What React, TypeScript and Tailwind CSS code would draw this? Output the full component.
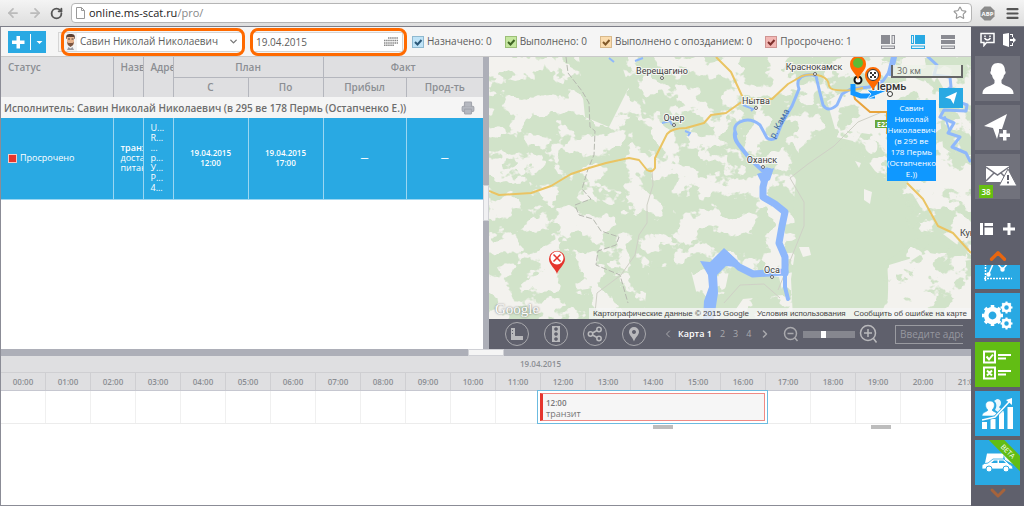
import { useState } from 'react'
import type { ReactNode } from 'react'
import { ArrowLeft, ArrowRight, ChevronDown, ChevronLeft, ChevronRight, ChevronUp, Menu, Printer, RotateCw, Star } from 'lucide-react'

interface StatusFilter {
    id: string
    label: string
    count: number
    box: string
    mark: string
}

const FILTERS: StatusFilter[] = [
    { id: 'assigned', label: 'Назначено', count: 0, box: 'bg-[#bfe3f7] border-[#8fb9d0]', mark: 'text-[#2c5878]' },
    { id: 'done', label: 'Выполнено', count: 0, box: 'bg-[#c5e79f] border-[#9cbf78]', mark: 'text-[#3f6425]' },
    { id: 'late', label: 'Выполнено с опозданием', count: 0, box: 'bg-[#fbdcae] border-[#d9b98b]', mark: 'text-[#80592a]' },
    { id: 'overdue', label: 'Просрочено', count: 1, box: 'bg-[#f2b7b4] border-[#cf9492]', mark: 'text-[#7d2f2c]' },
]

const HOUR_WIDTH = 45
const HOURS = Array.from({ length: 24 }, (_, i) => `${String(i).padStart(2, '0')}:00`)

const TOWNS = [
    { name: 'Верещагино', x: 173, y: 17, cx: 173, cy: 21 },
    { name: 'Очер', x: 185, y: 64, cx: 185, cy: 68 },
    { name: 'Нытва', x: 267, y: 47, cx: 267, cy: 51 },
    { name: 'Краснокамск', x: 325, y: 13, cx: 326, cy: 17 },
    { name: 'Оханск', x: 273, y: 106, cx: 274, cy: 110 },
    { name: 'Оса', x: 283, y: 216, cx: 283, cy: 220 },
]

function BrowserBar() {
    return (
        <header className="flex h-[27px] items-center border-b border-[#7d7e88] bg-gradient-to-b from-[#f4f4f4] to-[#dedede] pr-1 text-[#555]">
            <button aria-label="Назад" className="ml-1.5 text-[#bbb]"><ArrowLeft size={14} strokeWidth={3} /></button>
            <button aria-label="Вперёд" className="ml-2 text-[#bbb]"><ArrowRight size={14} strokeWidth={3} /></button>
            <button aria-label="Обновить" className="ml-2 text-[#555]"><RotateCw size={13} strokeWidth={3.4} /></button>
            <div className="ml-2 flex h-5 flex-1 items-center rounded-sm border border-[#b5b5b5] bg-white pr-1 pl-1">
                <svg width="9" height="12" viewBox="0 0 9 12" fill="#fff" stroke="#999"><path d="M.5.5h5l3 3v8h-8zM5.5.5v3h3" /></svg>
                <a href="#" className="ml-1 text-[11px] text-[#888]"><span className="text-[#222]">online.ms-scat.ru</span>/pro/</a>
                <Star size={14} className="ml-auto text-[#999]" />
            </div>
            <svg className="ml-2" width="15" height="15" viewBox="0 0 15 15">
                <path d="M4.5.5h6l4 4v6l-4 4h-6l-4-4v-6z" fill="#8b8b8b" />
                <text x="7.5" y="10" textAnchor="middle" fontSize="6" fontWeight="700" fill="#fff">ABP</text>
            </svg>
            <button aria-label="Меню" className="ml-2.5"><Menu size={15} strokeWidth={3.5} /></button>
        </header>
    )
}

function LayoutIcons() {
    return (
        <div className="ml-auto flex items-center gap-4 pr-4">
            <button aria-label="Вид 1">
                <svg width="14" height="14" viewBox="0 0 14 14"><path d="M0 0h9v9H0zM10.500 0h3.500v9h-3.500zM0 10.500h14V14H0z" fill="#8a8b92" /><path d="M11.500 1h1.500v7h-1.500zM1 11.500h12V13H1z" fill="#e6e6e8" /></svg>
            </button>
            <button aria-label="Вид 2">
                <svg width="14" height="14" viewBox="0 0 14 14"><path d="M4 0h10v9H4zM0 0h3v9H0zM0 10.500h14V14H0z" fill="#29a9e3" /><path d="M1 1h1v7H1zM1 11.500h12V13H1z" fill="#e6f3fa" /></svg>
            </button>
            <button aria-label="Вид 3">
                <svg width="14" height="14" viewBox="0 0 14 14"><path d="M0 0h14v4H0zM0 5h14v4H0zM0 10.500h14V14H0z" fill="#8a8b92" /><path d="M1 11.500h12V13H1z" fill="#dedee0" /></svg>
            </button>
        </div>
    )
}

function Toolbar() {
    const [date, setDate] = useState('19.04.2015')

    return (
        <div className="flex h-[30px] items-center border-b border-[#c9c9c9] bg-[#f5f5f5] pl-[7px] text-[10px] text-[#5d5d5d]">
            <button aria-label="Добавить" className="flex h-[22px] w-[38px] items-center bg-[#29a9e3]">
                <svg width="38" height="22" viewBox="0 0 38 22" fill="#fff"><path d="M8.500 5h3.500v4.500h4.500V13H12v4.500H8.500V13H4V9.500h4.500zM22 3h1v16h-1zM28.500 10h6l-3 3z" /></svg>
            </button>

            <div className="relative ml-3 flex h-5 w-[186px] items-center border border-[#d5d5d5] bg-white">
                <div className="flex h-full w-[18px] items-center justify-end bg-[#f3f3f3]">
                    <svg width="13" height="17" viewBox="0 0 13 17">
                        <path d="M2.500 6C1.500 2 3 1 6.500 1S11.500 2 10.500 6z" fill="#5a4034" />
                        <path d="M3 4h7v5q0 4-3.500 4T3 9z" fill="#e8b48e" />
                        <path d="M3 9l1 3 2.500 2L9 12l1-3-1.500 1h-4z" fill="#7a5542" />
                        <path d="M4 6h2M7.500 6h2" stroke="#444" />
                        <path d="M3 17l1.500-3L6.500 15.500 8.500 14l1.500 3z" fill="#9a9ba2" />
                    </svg>
                </div>
                <select aria-label="Исполнитель" className="h-full flex-1 appearance-none bg-white pl-[3px] outline-none">
                    <option>Савин Николай Николаевич</option>
                </select>
                <ChevronDown size={11} strokeWidth={3} className="pointer-events-none absolute right-1 text-[#777]" />
                <span className="pointer-events-none absolute -inset-y-[5px] -right-0.5 left-0.5 rounded-lg border-[3px] border-[#ff6a00]" />
            </div>

            <div className="relative ml-[7px] flex h-5 w-[152px] items-center border border-[#d5d5d5] bg-white">
                <input aria-label="Дата" value={date} onChange={(e) => setDate(e.target.value)} className="h-full w-full bg-white pl-1 outline-none" />
                <svg className="absolute right-1" width="14" height="9" viewBox="0 0 14 9" stroke="#888" strokeWidth="1.500" strokeDasharray="1.500 .6">
                    <path d="M4 1h10M0 3.500h14M0 6h14M0 8.300h10" />
                </svg>
                <span className="pointer-events-none absolute -inset-y-[5px] -right-[5px] -left-0.5 rounded-lg border-[3px] border-[#ff6a00]" />
            </div>

            <div className="ml-[9px] flex items-center gap-[13px]">
                {FILTERS.map((f) => (
                    <label key={f.id} htmlFor={f.id} className="relative flex items-center gap-[3px] whitespace-nowrap">
                        <input id={f.id} type="checkbox" defaultChecked className={`peer size-3 appearance-none border ${f.box}`} />
                        <svg className={`pointer-events-none absolute left-0 hidden peer-checked:block ${f.mark}`} width="12" height="12" viewBox="0 0 12 12" fill="none" stroke="currentColor" strokeWidth="2"><path d="M3 6l2.500 2.500L9.500 4" /></svg>
                        {f.label}: {f.count}
                    </label>
                ))}
            </div>

            <LayoutIcons />
        </div>
    )
}

function TaskTable() {
    const cell = 'border-r border-[#9bd6f1] overflow-hidden'

    return (
        <table className="w-full table-fixed border-collapse text-[#8b8e93]">
            <colgroup>
                <col className="w-[112px]" />
                <col className="w-[30px]" />
                <col className="w-[30px]" />
                <col className="w-[75px]" />
                <col className="w-[75px]" />
                <col className="w-[83px]" />
                <col />
            </colgroup>
            <thead className="bg-[#dfdfe1] text-[10px] leading-[12px] font-semibold">
                <tr className="h-5">
                    <th rowSpan={2} className="border-r border-[#b4b6bd] pt-1 pl-[7px] text-left align-top font-semibold">Статус</th>
                    <th rowSpan={2} className="overflow-hidden border-r border-[#b4b6bd] pt-1 pl-[7px] text-left align-top font-semibold">Название</th>
                    <th rowSpan={2} className="overflow-hidden border-r border-[#b4b6bd] pt-1 pl-[7px] text-left align-top font-semibold">Адрес</th>
                    <th colSpan={2} className="border-r border-b border-[#b4b6bd] font-semibold">План</th>
                    <th colSpan={2} className="border-b border-[#b4b6bd] font-semibold">Факт</th>
                </tr>
                <tr className="h-5">
                    <th className="border-r border-[#b4b6bd] font-semibold">С</th>
                    <th className="border-r border-[#b4b6bd] font-semibold">По</th>
                    <th className="border-r border-[#b4b6bd] font-semibold">Прибыл</th>
                    <th className="font-semibold">Прод-ть</th>
                </tr>
            </thead>
            <tbody>
                <tr className="h-[21px] bg-[#f5f5f5] text-[10px] leading-[14px] font-semibold text-[#6d6d6d]">
                    <td colSpan={7} className="pr-2 pl-[3px]">
                        <div className="flex items-center justify-between">
                            <span>Исполнитель: Савин Николай Николаевич (в 295 ве 178 Пермь (Остапченко Е.))</span>
                            <button aria-label="Печать"><Printer size={14} fill="#b5b8c0" className="text-[#a3a6ae]" /></button>
                        </div>
                    </td>
                </tr>
                <tr className="h-[81px] border-b border-[#9bd6f1] bg-[#29a9e3] text-center text-[8px] leading-[10px] font-semibold text-white">
                    <td className={`${cell} pl-[7px]`}>
                        <span className="flex items-center gap-[3px] text-[9px] font-normal">
                            <span className="size-[9px] border border-[#f8c9c5] bg-[#e5352d]" />Просрочено
                        </span>
                    </td>
                    <td className={`${cell} pl-[7px] text-left text-[9px] whitespace-nowrap`}>
                        транзит<br /><span className="font-normal">доставка<br />питания</span>
                    </td>
                    <td className={`${cell} pl-[7px] text-left text-[9px] font-normal`}>
                        {['U...', 'R...', '...', 'р...', 'У...', 'Р...', '4...'].map((line) => (
                            <div key={line}>{line}</div>
                        ))}
                    </td>
                    <td className={cell}>19.04.2015<br />12:00</td>
                    <td className={cell}>19.04.2015<br />17:00</td>
                    <td className={cell}>—</td>
                    <td>—</td>
                </tr>
            </tbody>
        </table>
    )
}

function MapDrawing() {
    return (
        <svg className="block h-[262px] w-full bg-[#d1e3c9]" viewBox="0 0 482 262" preserveAspectRatio="xMinYMin slice" fill="none">
            <defs>
                <filter id="fields" x="0" y="0" width="100%" height="100%" colorInterpolationFilters="sRGB">
                    <feTurbulence type="fractalNoise" baseFrequency="0.043 0.051" numOctaves="4" seed="5" />
                    <feColorMatrix values="0 0 0 0 .953  0 0 0 0 .949  0 0 0 0 .933  22 0 0 0 -10.900" />
                </filter>
                <filter id="woods" x="0" y="0" width="100%" height="100%" colorInterpolationFilters="sRGB">
                    <feTurbulence type="fractalNoise" baseFrequency="0.043 0.053" numOctaves="4" seed="21" />
                    <feColorMatrix values="0 0 0 0 .820  0 0 0 0 .890  0 0 0 0 .788  22 0 0 0 -11.800" result="n" />
                    <feComposite in="n" in2="SourceGraphic" operator="in" />
                </filter>
            </defs>

            {/* Terrain */}
            <rect width="482" height="262" filter="url(#fields)" />
            <path d="M310 92l20-16 34 8 22 30 26 20 20 34-12 20-22 16 2 34-10 24H304l-2-40 6-40-4-30zM160 212l40-6 14 56h-60zM240 214l50 6 4 18-40 4-14 20h-10zM90 0h40l10 30-20 40-24-10z" fill="#d1e3c9" />
            <path d="M378 84q6-4 10 2 2 10-6 11-9-4-4-13M375 132l8 3-2 12-6-4M310 190l10 0 2 8-8 2M366 104l6 2-2 5z" fill="#f3f2ee" />
            <path d="M338 44l60-34 50 20 6 60 28 20v88l-40-30-26-44-30-46-40-6zM400 208l40-12 42 6v60h-84z" fill="#f3f2ee" />
            <path d="M338 30l60-30 50 20 34 60v182h-84l-4-40 40-26-56-90-40-20z" fill="#fff" filter="url(#woods)" />

            {/* District borders and minor roads */}
            <g stroke="#b6b9b0" strokeWidth="1">
                <path d="M77 0l2 16 14 18 7 12 1 24 5 4-1 24-6 14-6 20 9 10-16 6 4 10 14 4 8 12 18 6-3 8-18 6-2 14 24 10 4 14 4 14" strokeDasharray="6 2" />
                <path d="M163 114l1 14-6 20v18l-8 12-4 20-14 20-24 18-2 20M393 55l-24 10-24 24-26 18-18 14 14 24v24l-12 30-14 34M235 246l16-18 24-1 16 14" stroke="#cfd0c6" />
            </g>

            {/* Rivers and reservoir */}
            <g stroke="#8fb8fb" strokeLinejoin="round" strokeLinecap="round">
                <path d="M404 0l-2 12-8 12-14 6-18 2-9 5-5 11q-9 8-14 0l-4-16-3-13q-8-3-15 1-5 4-2 12l-7 17-10 17-6 15q-5 3-9 0l-7-13q-10-8-20-3-8 4-4 12" strokeWidth="3" />
                <path d="M405 0l-4 16" strokeWidth="6" />
                <path d="M246 76q-1 6 4 12l11 14 12 11 8 0" strokeWidth="4" />
                <path d="M278 114l-4 16 0 10 12 7 10 8-3 14-3 17 6 14v16" strokeWidth="7" />
                <path d="M296 210v20l3 12" strokeWidth="4" />
                <path d="M296 215l-32 2-14-7-14-13" strokeWidth="7" />
                <path d="M439 0l9 8-3 10 16 2 1 10-8 6M462 42l16 6-1 6-22-1-4 7 14 6-6 10 12 4-8 10 14 6 4 8" strokeWidth="3" />
                <path d="M456 60l4 12" strokeWidth="2" />
            </g>
            <path d="M235 191l14 13-2 6-10-1-9 9 1 18-4 26h-11l1-18 5-14-1-12-8-14 10 1zM268 117l17-6-4 12-8 4z" fill="#8fb8fb" />
            <path d="M173 66l8-2 2 4M254 48l10 4-2 2M196 74l5 2-2 3M120 1l5 4M146 4l8-3" stroke="#8fb8fb" strokeWidth="2" />

            {/* Highways */}
            <g stroke="#eac463" strokeWidth="2" strokeLinejoin="round">
                <path d="M0 134l10 4 32-2 20-7 20-12 18-6 17-5 23-5 10 2 8 10q5 3 8-2l0-10 12-24q5-6 19-6l18-5 7-8 15-2 14-10 12-4 20 0 16-15 14-8q10-3 19 0 8 3 8 10 2 6 24 4l10-2M227 0l15 15 12 26" />
                <path d="M418 126l16 16 15 27 15 7 18 20" />
                <path d="M364 34l2 8 15 13h17v22" stroke="#e8a33b" />
            </g>

            {/* Vehicle route */}
            <path d="M364 27v9l8 3h14" stroke="#1497ff" strokeWidth="5" />
            <path d="M378 33l22 0-22 9 4-5z" fill="#1497ff" stroke="#fff" strokeWidth=".8" />

            {/* Town names */}
            <g fontFamily="Roboto, sans-serif" fill="#3d3d3d">
                {TOWNS.map((t) => (
                    <g key={t.name}>
                        <text x={t.x} y={t.y} textAnchor="middle" fontSize="9" stroke="#f7f7f4" strokeWidth="2" paintOrder="stroke">{t.name}</text>
                        <circle cx={t.cx} cy={t.cy} r="1.500" fill="#fff" stroke="#666" />
                    </g>
                ))}
                <text x="383" y="33" fontSize="11" fontWeight="500" fill="#333" stroke="#f7f7f4" strokeWidth="2" paintOrder="stroke">Пермь</text>
                <circle cx="401" cy="37" r="2.500" fill="#fff" stroke="#333" />
                <text x="471" y="179" fontSize="9">Кунгур</text>
                <text x="293" y="68" fontSize="9" fill="#41699f" textAnchor="middle" transform="rotate(-62 293 68)">р. Кама</text>
            </g>
            <rect x="386" y="63" width="18" height="8" fill="#69a73d" />
            <text x="388" y="70" fontSize="7" fontWeight="700" fill="#fff">E22</text>

            {/* Pins */}
            <circle cx="369" cy="23" r="3.500" fill="#fff" stroke="#111" strokeWidth="2" />
            <path d="M369 23c-2-7-8-9-8-16a8 8 0 0 1 16 0c0 7-6 9-8 16z" fill="#ff6a00" />
            <circle cx="369" cy="6" r="5" fill="#5dbb35" />
            <path d="M384 34c-2-7-8-9-8-16a8 8 0 0 1 16 0c0 7-6 9-8 16z" fill="#ff6a00" />
            <circle cx="384" cy="18" r="5.500" fill="#fff" stroke="#333" />
            <path d="M381 15h2v2h-2zM385 15h2v2h-2zM383 17h2v2h-2zM381 19h2v2h-2zM385 19h2v2h-2z" fill="#333" />
            <path d="M68 217c-1-5-8-9-8-15a8 8 0 0 1 16 0c0 6-7 10-8 15z" fill="#e5352d" />
            <circle cx="68" cy="201" r="6.500" fill="#fff" />
            <path d="M64.500 197.500l7 7M71.500 197.500l-7 7" stroke="#e5352d" strokeWidth="1.500" />
        </svg>
    )
}

function RoundButton({ label, children }: { label: string; children: ReactNode }) {
    return (
        <button aria-label={label} className="flex size-6 items-center justify-center rounded-full border border-[#a9a9ad]">
            <svg width="16" height="16" viewBox="0 0 16 16" fill="#b9b9bc">{children}</svg>
        </button>
    )
}

function MapPanel() {
    return (
        <section className="min-w-0 flex-1 overflow-hidden">
            <div className="relative">
                <MapDrawing />
                <div className="absolute top-2 right-2 h-[13px] w-[72px] border-2 border-t-0 border-[#666] bg-[#eef1e8]/80 pl-1 text-[9px] leading-[11px] text-[#666]">30 км</div>
                <button aria-label="Моё местоположение" className="absolute top-[31px] right-2 flex h-5 w-6 items-center justify-center bg-[#29a9e3]">
                    <svg width="12" height="12" viewBox="0 0 12 12" fill="#fff"><path d="M12 0L8.500 12 5.500 7 0 5.500z" /></svg>
                </button>
                <div className="absolute top-[43px] right-[35px] w-[49px] bg-[#0f98ff] py-0.5 text-center text-[8px] leading-[11px] text-white">
                    Савин Николай Николаевич (в 295 ве 178 Пермь (Остапченко Е.))
                </div>
                <div className="absolute bottom-0 left-1.5 font-['Liberation_Serif',serif] text-[15px] leading-[20px] text-white [text-shadow:0_0_2px_#555]">Google</div>
                <div className="absolute right-0 bottom-0 flex h-[11px] items-center bg-[#f5f5f5]/80 font-['Liberation_Sans',sans-serif] text-[8px] whitespace-nowrap text-[#444]">
                    <span className="px-1">Картографические данные © 2015 Google</span>
                    <a href="#" className="px-1">Условия использования</a>
                    <a href="#" className="px-1">Сообщить об ошибке на карте</a>
                </div>
            </div>

            <div className="flex h-[30px] items-center bg-[#5f606c] pl-4 text-[9px] text-[#a9a9ad]">
                <div className="flex gap-[15px]">
                    <RoundButton label="Линейка"><path d="M2 2h4v8h8v4H2zM3 4v1h1V4zM3 7v1h1V7z" /></RoundButton>
                    <RoundButton label="Пробки">
                        <path fillRule="evenodd" d="M4 0h8v16H4zM8 1.200a1.800 1.800 0 1 0 .01 0zM8 6.200a1.800 1.800 0 1 0 .01 0zM8 11.200a1.800 1.800 0 1 0 .01 0z" />
                    </RoundButton>
                    <RoundButton label="Поделиться">
                        <g fill="none" stroke="#b9b9bc" strokeWidth="1.500"><circle cx="3.500" cy="8" r="2.200" /><circle cx="12" cy="3.500" r="2.200" /><circle cx="12" cy="12.500" r="2.200" /><path d="M5.500 7l4.500-2.500M5.500 9l4.500 2.500" /></g>
                    </RoundButton>
                    <RoundButton label="Метка"><path fillRule="evenodd" d="M8 1a5 5 0 0 1 5 5c0 3-3.500 5-5 9.500C6.500 11 3 9 3 6a5 5 0 0 1 5-5zm0 3a2 2 0 1 0 .01 0z" /></RoundButton>
                </div>
                <nav className="ml-4 flex items-center">
                    <button aria-label="Предыдущая"><ChevronLeft size={12} /></button>
                    <a href="#" className="ml-1 font-semibold whitespace-nowrap text-white">Карта 1</a>
                    <a href="#" className="ml-2">2</a>
                    <a href="#" className="ml-2">3</a>
                    <a href="#" className="ml-2">4</a>
                    <button aria-label="Следующая" className="ml-2"><ChevronRight size={12} strokeWidth={3} /></button>
                </nav>
                <button aria-label="Отдалить" className="ml-3">
                    <svg width="16" height="16" viewBox="0 0 16 16" fill="none" stroke="#a9a9ad" strokeWidth="1.500"><circle cx="7.500" cy="7.500" r="6" /><path d="M12 12l2.500 3M4.500 7.500h6" /></svg>
                </button>
                <input
                    aria-label="Масштаб"
                    type="range"
                    defaultValue="38"
                    className="mx-1 h-[7px] w-[52px] appearance-none bg-[#86878f] [&::-webkit-slider-thumb]:h-[7px] [&::-webkit-slider-thumb]:w-[5px] [&::-webkit-slider-thumb]:appearance-none [&::-webkit-slider-thumb]:bg-white"
                />
                <button aria-label="Приблизить">
                    <svg width="20" height="20" viewBox="0 0 20 20" fill="none" stroke="#b9b9bc" strokeWidth="1.500"><circle cx="9" cy="9" r="7.500" /><path d="M14.500 14.500l3 4M5 9h8M9 5v8" /></svg>
                </button>
                <input aria-label="Адрес" placeholder="Введите адрес" className="mr-2 ml-auto h-[19px] w-[68px] border border-r-0 border-[#9a9ba1] pl-1 text-[10px] outline-none placeholder:text-[#96979f]" />
            </div>
        </section>
    )
}

function Timeline() {
    return (
        <section className="flex-1 overflow-hidden bg-white text-[8px] font-semibold text-[#8b8e93]">
            <div className="border-b border-[#cfcfd2] bg-[#dfdfe1] pl-[109px] text-center text-[8px] leading-4">19.04.2015</div>
            <div className="relative">
                <div className="flex h-[18px] border-b border-[#c6c7d0] bg-[#dfdfe1]">
                    {HOURS.map((h) => (
                        <div key={h} className="w-[45px] shrink-0 border-r border-[#cfcfd2] text-center leading-[17px]">{h}</div>
                    ))}
                </div>
                <div className="flex h-[33px] border-b border-[#ececec]">
                    {HOURS.map((h) => (
                        <div key={h} className="w-[45px] shrink-0 border-r border-[#f0f0f0]" />
                    ))}
                </div>
                <div
                    className="absolute top-[17px] h-[34px] border border-[#6cbbe0] bg-white p-0.5"
                    style={{ left: 12 * HOUR_WIDTH - 4, width: 5 * HOUR_WIDTH + 6 }}
                >
                    <div className="h-full border border-l-[3px] border-[#ef8a85] border-l-[#e5352d] bg-[#f6f6f6] pt-[3px] pl-[3px] leading-[11px] text-[#777]">
                        12:00<br /><span className="text-[9px] font-normal">транзит</span>
                    </div>
                </div>
                <div className="absolute top-[52px] left-[652px] h-1 w-5 bg-[#bdbdbd]" />
                <div className="absolute top-[52px] left-[870px] h-1 w-5 bg-[#bdbdbd]" />
            </div>
        </section>
    )
}

function Tile({ label, className, children }: { label: string; className: string; children: ReactNode }) {
    return (
        <button aria-label={label} className={`relative flex size-[45px] shrink-0 items-center justify-center overflow-hidden ${className}`}>
            {children}
        </button>
    )
}

function Gear({ x, y, r }: { x: number; y: number; r: number }) {
    return (
        <g transform={`translate(${x} ${y})`}>
            <circle r={r * 0.6} fill="none" stroke="#fff" strokeWidth={r * 0.45} />
            {[0, 45, 90, 135, 180, 225, 270, 315].map((a) => (
                <rect key={a} x={-r * 0.17} y={-r} width={r * 0.34} height={r * 0.35} transform={`rotate(${a})`} fill="#fff" />
            ))}
        </g>
    )
}

function Sidebar() {
    return (
        <aside className="flex w-[53px] shrink-0 flex-col items-center bg-[#5f606c]">
            <div className="flex h-[29px] items-center gap-2 pb-1">
                <button aria-label="Отзыв">
                    <svg width="15" height="15" viewBox="0 0 15 15" fill="none" stroke="#fff" strokeWidth="1.500"><path d="M1 1.500h13v9H6.500L4 13.500v-3H1zM4.500 6q3 4 6 0" /><path d="M5 3.500v1.500M10 3.500v1.500" /></svg>
                </button>
                <button aria-label="Выход">
                    <svg width="13" height="14" viewBox="0 0 13 14" fill="#fff"><path d="M0 1l6-1v14l-6-2zM7 1h3v3H9V2H7zM7 12h2v-2h1v3H7zM7 6h3V4l3 3-3 3V8H7z" /></svg>
                </button>
            </div>

            <div className="flex flex-col gap-1">
                <Tile label="Профиль" className="bg-[#71727c]">
                    <svg width="34" height="32" viewBox="0 0 34 32" fill="#fff"><path d="M17 0c5 0 7 3.500 7 8 1.500 1 0 4-1 4-.5 3-1.500 4-2.500 5v3c1 3 12 3 12 10v1h-31v-1c0-7 11-7 12-10v-3c-1-1-2-2-2.500-5-1 0-2.500-3-1-4 0-4.500 2-8 7-8z" /></svg>
                </Tile>
                <Tile label="Добавить точку" className="bg-[#71727c]">
                    <svg width="28" height="28" viewBox="0 0 28 28" fill="#fff"><path d="M23 0l-5 15-3 0v3l-2 7-4-11-9-2zM19 16h3.500v3.500H26V23h-3.500v3.500H19V23h-3.500v-3.500H19z" /></svg>
                </Tile>
                <Tile label="Сообщения" className="bg-[#71727c]">
                    <svg className="ml-2" width="32" height="23" viewBox="0 0 32 23">
                        <path d="M0 1h23v16H0z" fill="#fff" />
                        <path d="M0 2l11.500 8L23 2M0 16l8-8M23 16l-8-8" fill="none" stroke="#71727c" strokeWidth="1.500" />
                        <path d="M22 4l9 17H13z" fill="#fff" stroke="#71727c" />
                        <path d="M21 10h2v5h-2zM21 16.500h2v2h-2z" fill="#5f606c" />
                    </svg>
                    <span className="absolute bottom-px left-1 h-[13px] w-3.5 bg-[#66bf12] text-[8px] leading-[13px] font-semibold text-white">38</span>
                </Tile>
            </div>

            <div className="flex h-[66px] flex-col items-center">
                <div className="mt-6 flex items-center gap-2.5">
                    <svg width="13" height="12" viewBox="0 0 13 12" fill="#fff"><path d="M0 0h3v12H0zM4.500 0H13v3H4.500zM4.500 4.500H13V12H4.500z" /></svg>
                    <button aria-label="Добавить вкладку">
                        <svg width="12" height="12" viewBox="0 0 12 12" fill="#fff"><path d="M4.500 0h3v4.500H12v3H7.500V12h-3V7.500H0v-3h4.500z" /></svg>
                    </button>
                </div>
                <ChevronUp size={26} strokeWidth={3} className="mt-auto -mb-1 text-[#e8660f]" />
            </div>

            <div className="flex flex-col gap-1">
                <div className="flex h-6 items-end overflow-hidden">
                    <Tile label="Графики" className="bg-[#29a9e3]">
                        <svg width="28" height="30" viewBox="0 0 28 30" fill="none" stroke="#fff" strokeWidth="1.500">
                            <path d="M1.500 0v29M0 26.500h28" strokeDasharray="2 1" /><path d="M4.500 22.500L9.500 11M13 11l5.500 6.500L24 11" /><circle cx="4.500" cy="22.500" r="1.500" fill="#fff" /><circle cx="18.500" cy="17.500" r="1.500" fill="#fff" />
                        </svg>
                    </Tile>
                </div>
                <Tile label="Настройки" className="bg-[#29a9e3]">
                    <svg width="32" height="30" viewBox="0 0 32 30"><Gear x={10.5} y={14.5} r={10.5} /><Gear x={24.5} y={6.5} r={6} /><Gear x={24.5} y={22.500} r={6} /></svg>
                </Tile>
                <Tile label="Задания" className="bg-[#62bd14]">
                    <svg width="29" height="30" viewBox="0 0 29 30" fill="none" stroke="#fff" strokeWidth="2"><path d="M1 1.500h11v11H1zM1 17.500h11v11H1zM3.500 6.500l2.500 3 4-5M4 20.500l5 5M9 20.500l-5 5M15 5h13M15 8.500h8M15 21h13M15 24.500h8" /></svg>
                </Tile>
                <Tile label="Отчёты" className="bg-[#29a9e3]">
                    <svg width="31" height="32" viewBox="0 0 31 32" fill="#fff">
                        <path d="M15 1c5 0 5 6 2 8 1 2 5 2 5 6l-4 2c-1-3-4-4-5-5 2-3 2-7-1-9z" opacity=".9" />
                        <path d="M8 3c6 0 5 7 2 9 1 2 6 2 6 6H0c0-4 5-4 6-6-3-2-4-9 2-9z" stroke="#29a9e3" strokeWidth=".6" />
                        <path d="M0 24h5v7H0zM8.500 21h5v10h-5zM17 15h5v16h-5zM25.500 9H31v22h-5.500z" />
                        <path d="M0 22l13-3 14-15" fill="none" stroke="#29a9e3" strokeWidth="3" /><path d="M0 22l13-3 14-15" fill="none" stroke="#fff" strokeWidth="1.500" /><path d="M30 0v7l-6-5z" />
                    </svg>
                </Tile>
                <Tile label="Транспорт" className="bg-[#29a9e3]">
                    <svg width="32" height="20" viewBox="0 0 32 20" fill="#fff">
                        <path d="M5 .5h17l-1 6.500H11l-4 3H3z" />
                        <path d="M22 2h5l4 5v4l-8-4z" opacity=".9" />
                        <path d="M0 16v-4q2-2 6-2l5-4h11l5 5q4 1 4 5z" stroke="#29a9e3" strokeWidth=".8" />
                        <path d="M9 10l3-2.500h3.500V10zM17 7.500h4.500l2.500 2.500h-7z" fill="#29a9e3" />
                        <circle cx="7" cy="16" r="3" stroke="#29a9e3" /><circle cx="24" cy="16" r="3" stroke="#29a9e3" />
                    </svg>
                    <span className="absolute top-1.5 -right-4 w-14 rotate-45 bg-[#62bd14] text-center text-[7px] leading-[11px] text-white">BETA</span>
                </Tile>
            </div>
            <ChevronDown size={24} strokeWidth={3} className="-mt-1 text-[#a5633c]" />
        </aside>
    )
}

export default function App() {
    return (
        <div className="flex min-h-screen flex-col overflow-hidden bg-white font-['Open_Sans',sans-serif]">
            <BrowserBar />
            <div className="flex flex-1">
                <main className="flex min-w-0 flex-1 flex-col border-b border-l border-[#8b8c96]">
                    <Toolbar />
                    <div className="flex">
                        <section className="min-w-0 flex-1 overflow-hidden bg-white">
                            <TaskTable />
                        </section>
                        <div className="flex w-1.5 flex-col justify-center bg-[#adafb8]">
                            <div className="h-9 border border-[#d0d1d6] bg-[#f0f0f2]" />
                        </div>
                        <MapPanel />
                    </div>
                    <div className="flex h-[7px] justify-center bg-[#adafb8]">
                        <div className="w-9 border border-[#d0d1d6] bg-[#f5f5f5]" />
                    </div>
                    <Timeline />
                </main>
                <Sidebar />
            </div>
        </div>
    )
}
